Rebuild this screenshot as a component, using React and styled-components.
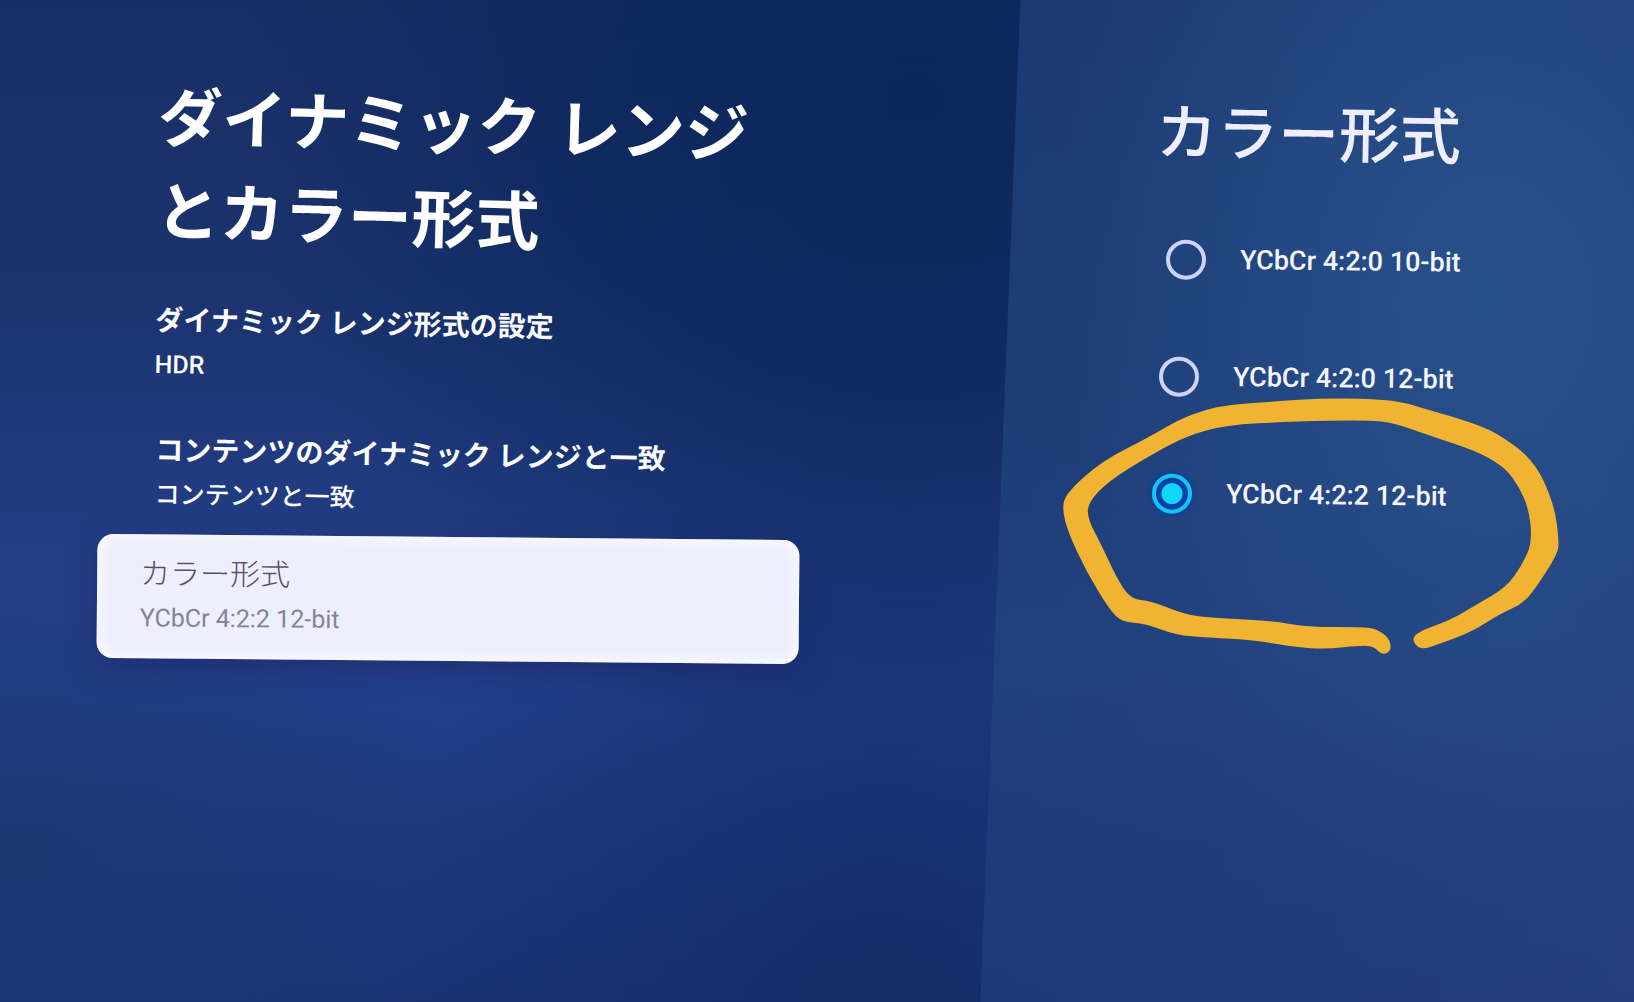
import React, { useState } from "react";
import styled, { createGlobalStyle } from "styled-components";

const settings = [
  { title: "ダイナミック レンジ形式の設定", value: "HDR" },
  { title: "コンテンツのダイナミック レンジと一致", value: "コンテンツと一致" },
];

const formats = [
  "YCbCr 4:2:0 10-bit",
  "YCbCr 4:2:0 12-bit",
  "YCbCr 4:2:2 12-bit",
];

// Outline of the hand-drawn marker ring
const ring = [
  [958, 796], [984, 782], [978, 744], [940, 716], [900, 711], [750, 711],
  [640, 691], [480, 684], [400, 672], [310, 632], [254, 628], [215, 565],
  [170, 460], [135, 390], [133, 340], [190, 275], [310, 195], [410, 138],
  [520, 105], [700, 95], [910, 90], [990, 98], [1100, 140], [1220, 182],
  [1290, 225], [1325, 262], [1367, 345], [1379, 455], [1350, 525], [1305, 592],
  [1220, 645], [1150, 690], [1060, 724], [1040, 750], [1066, 780], [1115, 763],
  [1210, 725], [1290, 670], [1350, 642], [1390, 592], [1450, 490], [1453, 450],
  [1440, 345], [1385, 212], [1280, 128], [1200, 95], [1090, 60], [990, 28],
  [800, 24], [650, 35], [530, 44], [460, 60], [390, 88], [300, 145],
  [175, 212], [72, 310], [62, 360], [80, 430], [130, 545], [195, 660],
  [230, 696], [295, 700], [380, 735], [470, 743], [600, 750], [700, 770],
  [800, 778], [900, 766], [935, 770],
];

const smooth = (points) => {
  const mid = (a, b) => `${(a[0] + b[0]) / 2} ${(a[1] + b[1]) / 2}`;
  const start = mid(points[points.length - 1], points[0]);
  const curves = points.map(
    (p, i) => `Q${p[0]} ${p[1]} ${mid(p, points[(i + 1) % points.length])}`
  );
  return `M${start}${curves.join("")}Z`;
};

const App = () => {
  const [selected, setSelected] = useState(formats[2]);
  return (
    <Screen>
      <GlobalStyle />
      <Main>
        <Title>
          ダイナミック レンジ
          <br />
          とカラー形式
        </Title>
        <Settings>
          {settings.map((item) => (
            <Setting key={item.title}>
              <Name>{item.title}</Name>
              <Value>{item.value}</Value>
            </Setting>
          ))}
        </Settings>
        <ActiveSetting>
          <Name>カラー形式</Name>
          <Value>{selected}</Value>
        </ActiveSetting>
      </Main>
      <Side>
        <SideTitle id="format-title">カラー形式</SideTitle>
        <Options role="radiogroup" aria-labelledby="format-title">
          {formats.map((format, i) => (
            <Option key={format} $step={i}>
              <Radio
                type="radio"
                name="format"
                checked={selected === format}
                onChange={() => setSelected(format)}
              />
              <span>{format}</span>
            </Option>
          ))}
          <Marker viewBox="0 0 1568 870" preserveAspectRatio="none" aria-hidden="true">
            <path d={smooth(ring)} fill="#f0b432" />
          </Marker>
        </Options>
      </Side>
    </Screen>
  );
};

const GlobalStyle = createGlobalStyle`
  * {
    box-sizing: border-box;
    margin: 0;
    padding: 0;
  }
  body {
    background: #17306f;
    font-family: Roboto, "Noto Sans CJK JP", sans-serif;
  }
`;

const Screen = styled.div`
  display: grid;
  grid-template-columns: 3fr 2fr;
  min-height: 100vh;
  overflow: hidden;
  background:
    radial-gradient(ellipse at 56% 10%, rgba(10, 38, 90, 0.9), rgba(10, 38, 90, 0.7) 22%, transparent 52%),
    radial-gradient(ellipse at 54% 100%, rgba(20, 42, 102, 0.8), transparent 40%),
    radial-gradient(ellipse at 0% 85%, rgba(28, 56, 112, 0.8), transparent 22%),
    linear-gradient(180deg, #182e66 0%, #1b336e 28%, #223e86 56%, #203f8a 70%, #1b3374 100%);
`;
const Main = styled.main`
  padding: 81px 24px 0 97px;
`;
const Title = styled.h1`
  margin-left: 60px;
  width: 600px;
  font-size: 64px;
  font-weight: 700;
  line-height: 94px;
  color: #fff;
  transform: rotate(1.6deg);
`;
const Settings = styled.div`
  display: flex;
  flex-direction: column;
  align-items: flex-start;
  gap: 42px;
  margin: 30px 0 20px 58px;
`;
const Name = styled.span`
  display: block;
  font-size: 28px;
  font-weight: 700;
  line-height: 44px;
`;
const Value = styled.span`
  display: block;
  font-size: 25px;
  font-weight: 500;
  line-height: 44px;
`;
const Setting = styled.button`
  border: none;
  background: none;
  font-family: inherit;
  text-align: left;
  color: #fdfcff;
  cursor: pointer;
  transform: rotate(1deg);
  transform-origin: left center;
`;
const ActiveSetting = styled(Setting)`
  display: block;
  width: 100%;
  max-width: 702px;
  padding: 18px 43px;
  border-radius: 16px;
  background: #eeeefc;
  box-shadow: inset 0 0 18px #fff, 0 8px 28px rgba(34, 36, 100, 0.6);
  transform: rotate(0.5deg);
  transform-origin: center;
  ${Name} {
    font-size: 30px;
    font-weight: 300;
    color: #55506a;
  }
  ${Value} {
    font-weight: 400;
    color: #85839a;
  }
`;

const Side = styled.aside`
  padding: 96px 24px 0 176px;
  background:
    radial-gradient(ellipse at 78% 30%, rgba(40, 84, 142, 0.85), transparent 60%),
    linear-gradient(90deg, transparent, rgba(44, 66, 130, 0.5)),
    linear-gradient(180deg, #1b3a72 0%, #1c3d76 35%, #20407e 65%, #1f3878 100%);
  clip-path: polygon(40px 0, 100% 0, 100% 100%, 0 100%);
`;
const SideTitle = styled.h2`
  width: 340px;
  font-size: 61px;
  font-weight: 500;
  line-height: 80px;
  color: #eeeeff;
  transform: rotate(1deg);
`;
const Options = styled.div`
  position: relative;
  margin-top: 26px;
  padding-left: 10px;
`;
// Each row steps left to follow the slanted edge of the panel
const Option = styled.label`
  display: flex;
  align-items: center;
  gap: 34px;
  width: 300px;
  height: 117px;
  margin-left: ${(props) => props.$step * -7}px;
  font-size: 27px;
  font-weight: 500;
  color: #f6f6ff;
  cursor: pointer;
  transform: rotate(0.6deg);
`;
const Radio = styled.input`
  appearance: none;
  flex: none;
  width: 40px;
  height: 40px;
  border: 4px solid #cdd3f8;
  border-radius: 50%;
  cursor: pointer;
  &:checked {
    border-color: #14c4f2;
    background: radial-gradient(circle, #12d6fa 10px, #0a40a8 11px);
    box-shadow: 0 0 3px 2px #0b3f9c;
  }
`;
const Marker = styled.svg`
  position: absolute;
  top: 188px;
  left: -116px;
  width: 560px;
  height: 290px;
  pointer-events: none;
`;

export default App;
